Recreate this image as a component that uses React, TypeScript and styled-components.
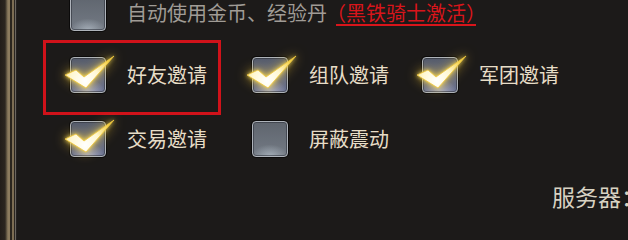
import styled, { createGlobalStyle } from "styled-components";

const GlobalStyle = createGlobalStyle`
  html, body {
    margin: 0;
    padding: 0;
    background: #1c1a19;
    overflow: hidden;
  }
  body {
    font-family: "Noto Sans CJK SC", "Noto Sans", sans-serif;
  }
`;

const Page = styled.div`
  display: flex;
  width: 628px;
  height: 240px;
  background: #1c1a19;
  overflow: hidden;
`;

const FrameEdge = styled.div`
  flex: 0 0 17px;
  height: 100%;
  background: linear-gradient(
    to right,
    #221e19 0px,
    #2b261f 5px,
    #4b4334 6px,
    #8d7d5f 8px,
    #8a7a5c 10px,
    #2a251e 10px,
    #2a251e 12px,
    #7c6d53 12px,
    #7c6d53 14px,
    #2a2520 14px,
    #2a2520 15px,
    #6a6660 15px,
    #6a6660 16px,
    #242120 16px
  );
`;

const Content = styled.div`
  flex: 1;
  display: flex;
  flex-direction: column;
  padding-left: 53px;
  margin-top: -5px;
`;

const Row = styled.div<{ $top: number }>`
  display: grid;
  grid-template-columns: 182px 170px auto;
  margin-top: ${(p) => p.$top}px;
  white-space: nowrap;
`;

const Item = styled.label`
  position: relative;
  display: flex;
  align-items: center;
  gap: 21px;
  height: 36px;
`;

const Box = styled.span<{ $checked?: boolean }>`
  position: relative;
  flex: 0 0 36px;
  width: 36px;
  height: 36px;
  box-sizing: border-box;
  border-radius: 4px;
  border: 1px solid #aeb3ba;
  box-shadow: inset 0 0 0 1px rgba(40, 44, 52, 0.55), 0 0 0 1px rgba(0, 0, 0, 0.6);
  background: ${(p) =>
    p.$checked
      ? "radial-gradient(ellipse 70% 55% at 50% 100%, rgba(190,195,225,0.75), rgba(0,0,0,0) 70%), linear-gradient(to bottom, #545b6c, #6a7190)"
      : "radial-gradient(ellipse 70% 45% at 50% 100%, rgba(175,185,195,0.8), rgba(0,0,0,0) 75%), linear-gradient(to bottom, #5f656e, #737a84)"};
`;

const Tick = styled.svg`
  position: absolute;
  left: -8px;
  top: -4px;
  width: 54px;
  height: 36px;
  overflow: visible;
  filter: drop-shadow(0 0 2px rgba(255, 225, 90, 0.95)) drop-shadow(0 0 6px rgba(240, 195, 50, 0.7));
`;

const Label = styled.span<{ $muted?: boolean }>`
  font-size: 20px;
  line-height: 28px;
  color: ${(p) => (p.$muted ? "#a09c96" : "#e7ddc7")};
`;

const Notice = styled.span`
  margin-left: 9px;
  font-size: 20px;
  line-height: 28px;
  color: #d8151b;
  text-decoration: underline;
  text-underline-offset: 3px;
  font-feature-settings: "halt" 1;
`;

const Highlight = styled.div`
  position: absolute;
  left: -27px;
  top: -17px;
  width: 178px;
  height: 75px;
  box-sizing: border-box;
  border: 3px solid #d0121a;
  pointer-events: none;
`;

const ServerLine = styled.div`
  margin-top: 24px;
  padding-left: 482px;
  font-size: 23px;
  line-height: 30px;
  color: #d8d2c2;
  white-space: nowrap;
`;

function Check({ checked }: { checked?: boolean }) {
  return (
    <Box $checked={checked}>
      {checked && (
        <Tick viewBox="-8 -4 54 36">
          <defs>
            <radialGradient id="tickFill" cx="14" cy="23" r="30" gradientUnits="userSpaceOnUse">
              <stop offset="0" stopColor="#ffffff" />
              <stop offset="0.5" stopColor="#fff8d2" />
              <stop offset="1" stopColor="#f4d24a" />
            </radialGradient>
          </defs>
          <polygon
            points="-6,17 5,12 13,19 43,-2 15,30"
            fill="url(#tickFill)"
            stroke="#f0c63c"
            strokeWidth="0.8"
            strokeLinejoin="round"
          />
        </Tick>
      )}
    </Box>
  );
}

export default function App() {
  return (
    <Page>
      <GlobalStyle />
      <FrameEdge />
      <Content>
        <Row $top={0}>
          <Item style={{ gridColumn: "1 / -1" }}>
            <Check />
            <span>
              <Label $muted>自动使用金币、经验丹</Label>
              <Notice>（黑铁骑士激活）</Notice>
            </span>
          </Item>
        </Row>
        <Row $top={26}>
          <Item>
            <Highlight />
            <Check checked />
            <Label>好友邀请</Label>
          </Item>
          <Item>
            <Check checked />
            <Label>组队邀请</Label>
          </Item>
          <Item>
            <Check checked />
            <Label>军团邀请</Label>
          </Item>
        </Row>
        <Row $top={28}>
          <Item>
            <Check checked />
            <Label>交易邀请</Label>
          </Item>
          <Item>
            <Check />
            <Label>屏蔽震动</Label>
          </Item>
        </Row>
        <ServerLine>服务器：</ServerLine>
      </Content>
    </Page>
  );
}
